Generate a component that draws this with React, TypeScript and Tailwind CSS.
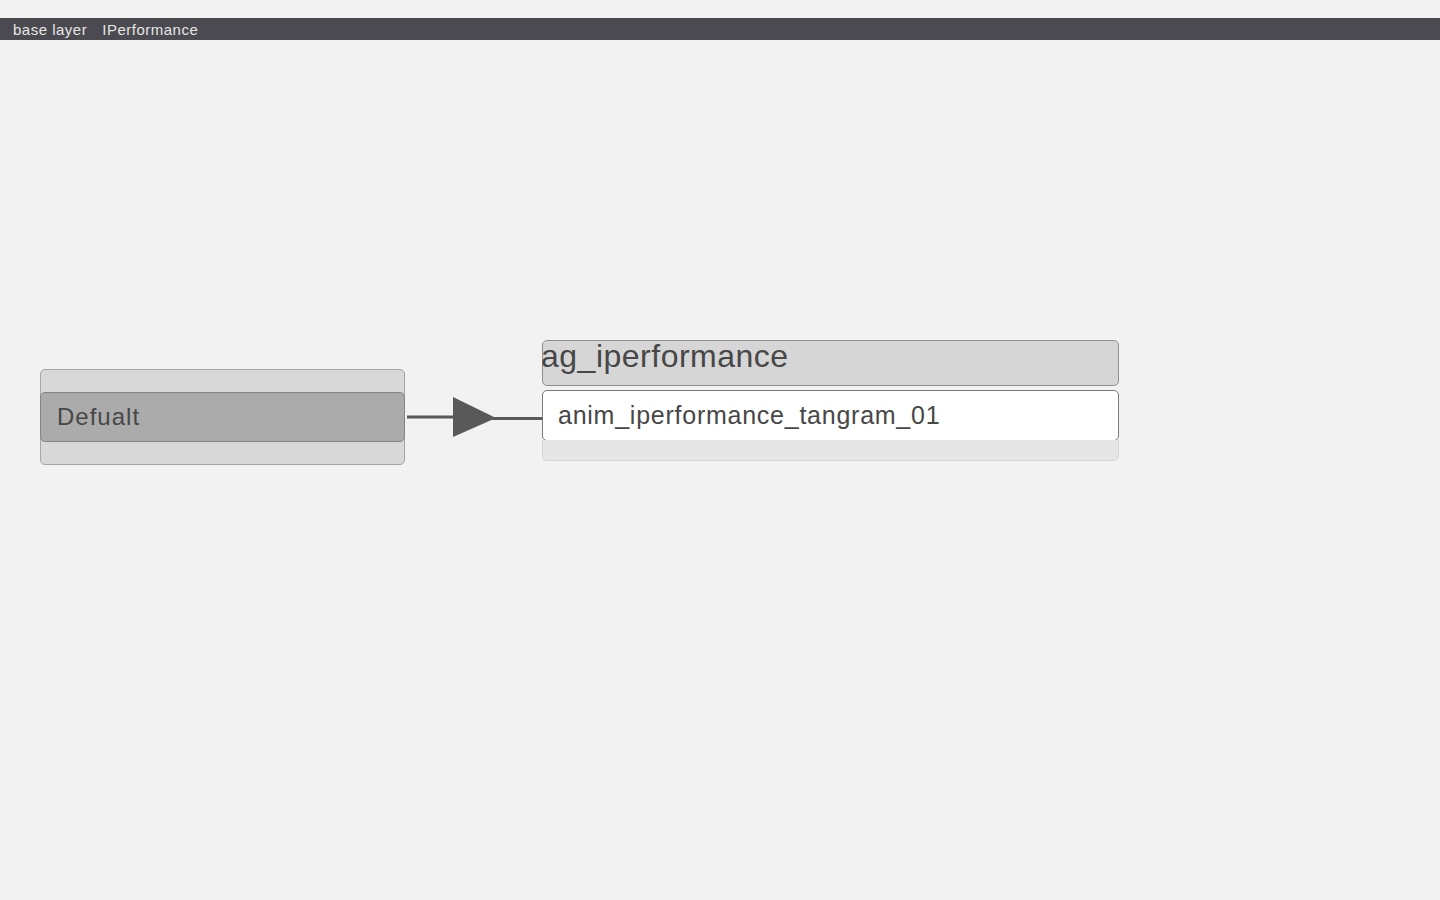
const font = { fontFamily: '"Liberation Sans", Arial, sans-serif' };

const Breadcrumbs = () => (
  <div className="mt-[18px] h-[22px] bg-[#4b4a50] flex items-center gap-[15px] pl-[13px] pt-[2px] text-[15px] tracking-[0.5px] text-[#e6e6e6]">
    <span>base layer</span>
    <span>IPerformance</span>
  </div>
);

// left state node
const StateNode = () => (
  <div className="absolute left-[40px] top-[369px] w-[365px] h-[96px] rounded-[5px] border border-[#a6a6a6] bg-[#d8d8d8] flex flex-col">
    <div className="h-[22px]" />
    <div className="mx-[-1px] h-[50px] rounded-[5px] border border-[#858585] bg-[#ababab] flex items-center pl-[16px] text-[24px] tracking-[1px] text-[#474747]">
      Defualt
    </div>
  </div>
);

// animation group node
const GroupNode = () => (
  <div className="absolute left-[542px] top-[340px] w-[577px] flex flex-col">
    <div className="h-[46px] rounded-[5px] border border-[#8f8f8f] bg-[#d6d6d6] text-[32px] leading-[31px] tracking-[0.5px] text-[#474747]">
      <span className="-ml-[2px]">ag_iperformance</span>
    </div>
    <div className="mt-[4px] h-[51px] rounded-[5px] border border-[#7a7a7a] bg-white flex items-center pl-[15px] text-[25px] tracking-[0.75px] text-[#474747]">
      anim_iperformance_tangram_01
    </div>
    <div className="mt-[-1px] h-[21px] rounded-b-[5px] border border-t-0 border-[#d4d4d4] bg-[#e6e6e6]" />
  </div>
);

const Connector = () => (
  <svg className="absolute left-[404px] top-[390px]" width="140" height="60" viewBox="0 0 140 60">
    <line x1="3" y1="27" x2="52" y2="27" stroke="#595959" strokeWidth="3" />
    <line x1="88" y1="28.5" x2="138" y2="28.5" stroke="#595959" strokeWidth="3" />
    <polygon points="49,7 49,47 92,28" fill="#595959" />
  </svg>
);

export default function App() {
  return (
    <div className="relative w-[1440px] h-[900px] bg-[#f2f2f2] overflow-hidden" style={font}>
      <Breadcrumbs />
      <StateNode />
      <Connector />
      <GroupNode />
    </div>
  );
}
